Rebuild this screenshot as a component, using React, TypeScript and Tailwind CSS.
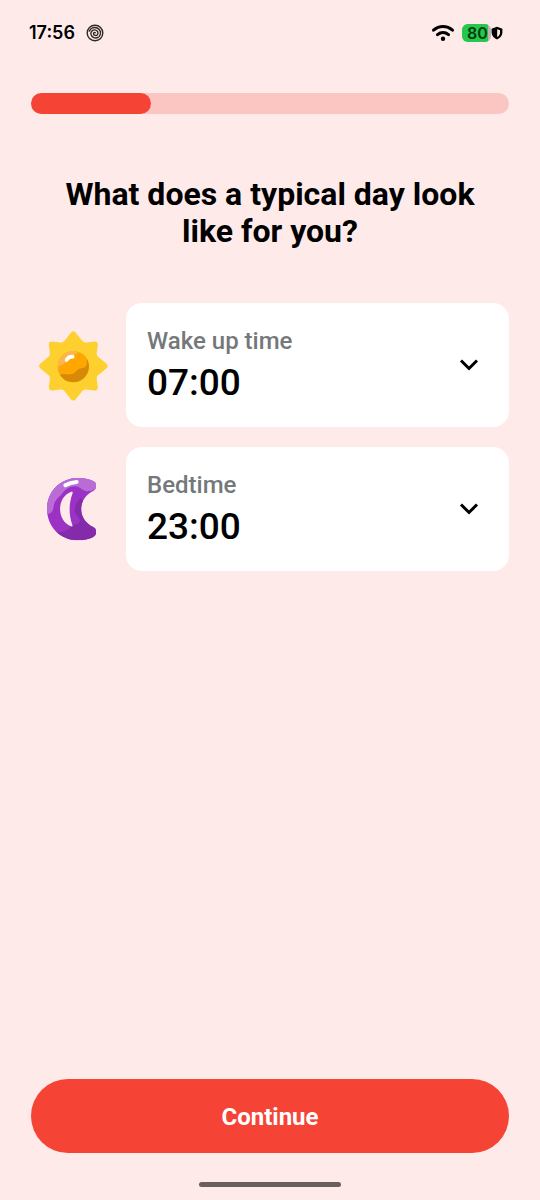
import type { ReactNode } from "react";

interface TimeFieldProps {
  id: string;
  label: string;
  value: string;
  icon: ReactNode;
}

const hours = Array.from(
  { length: 24 },
  (_, h) => `${String(h).padStart(2, "0")}:00`
);

function SunIcon() {
  return (
    <svg viewBox="22 20 216 216" className="w-[72px] h-[72px]" aria-hidden="true">
      <path
        d="M225 131 200 152Q191 160 193 170L196 196 170 193Q160 191 152 200L131 226 110 200Q102 191 92 193L66 196 69 170Q71 160 62 152L37 131 62 110Q71 102 69 92L66 66 92 69Q102 71 110 62L131 36 152 62Q160 71 170 69L196 66 193 92Q191 102 200 110Z"
        fill="#fdd02f"
        stroke="#fdd02f"
        strokeWidth="17"
        strokeLinejoin="round"
      />
      <circle cx="131" cy="133" r="47" fill="#ffa600" />
      <path
        d="M84 136A47 47 0 0 1 147 89C140 97 130 97 122 101C109 107 111 117 105 123C99 129 90 128 84 136Z"
        fill="#fdb64d"
      />
      <path
        d="M170 107A47 47 0 0 1 91 158C101 151 113 158 124 156C136 154 138 146 146 141C154 136 165 140 170 129C173 121 172 114 170 107Z"
        fill="#d68a08"
      />
      <path
        d="M111 113C114 107 122 103 129 103"
        fill="none"
        stroke="#fff"
        strokeWidth="11"
        strokeLinecap="round"
      />
    </svg>
  );
}

function MoonIcon() {
  return (
    <svg viewBox="0 0 228 264" className="w-[76px] h-[88px]" aria-hidden="true">
      <clipPath id="moon">
        <path d="M176 77C126 100 126 164 176 187Q183 190 183 198V204Q183 212 175 216C162 223 145 226 129 226C75 226 36 184 36 132C36 80 75 39 129 39C146 39 162 42 176 49Q183 52 183 60V66Q183 73 176 77Z" />
      </clipPath>
      <g clipPath="url(#moon)">
        <path d="M30 30h160v200H30z" fill="#9b31c5" />
        <path
          d="M30 148C48 149 54 139 56 125C58 105 73 96 83 84C92 71 106 65 119 64C134 63 145 81 159 79C172 78 180 72 190 68V30H30Z"
          fill="#b96cd6"
        />
        <path
          d="M60 203C79 202 96 198 106 188C119 174 129 182 134 169C138 156 119 151 119 135C120 118 130 108 137 98L190 160V235H60Z"
          fill="#842baa"
        />
      </g>
      <path
        d="M109 80C64 95 64 169 109 184Q114 185 112 180C101 148 101 116 113 84Q114 79 109 80Z"
        fill="#feebe9"
      />
      <path
        d="M91 61C101 55 112 52 125 51"
        fill="none"
        stroke="#fff"
        strokeWidth="12"
        strokeLinecap="round"
      />
    </svg>
  );
}

function ChevronIcon() {
  return (
    <svg
      viewBox="0 0 20 12"
      className="w-5 h-3"
      fill="none"
      stroke="#000"
      strokeWidth="3"
      aria-hidden="true"
    >
      <path d="M2 1.5 10 9.5 18 1.5" />
    </svg>
  );
}

function StatusBar() {
  return (
    <div className="flex items-center justify-between h-[66px] pl-[29px] pr-[37px] font-['Inter',sans-serif] text-black">
      <div className="flex items-center gap-[11px]">
        <span className="text-lg font-semibold">17:56</span>
        <svg
          viewBox="0 0 18 18"
          className="w-[18px] h-[18px]"
          fill="none"
          stroke="#302625"
          strokeWidth="1.4"
          strokeLinecap="round"
          aria-hidden="true"
        >
          <circle cx="9" cy="9" r="7.8" />
          <path d="M3.5 7C4.5 4 8 2.700 11.2 4C14.600 5.500 15.500 9.500 13.400 12.200" />
          <path d="M12.400 13.200C9.500 15 5.500 13.500 4.900 10.200C4.500 7.500 6.500 5.800 8.900 5.900C11.500 6.100 12.800 8.800 11.400 10.700C10.200 12 7.700 11.600 7.500 9.800C7.400 8.700 8.500 8.100 9.300 8.700" />
        </svg>
      </div>
      <div className="flex items-center">
        <svg
          viewBox="0 0 24 18"
          className="w-6 h-[18px] mr-[7px]"
          fill="none"
          stroke="#000"
          strokeWidth="3"
          strokeLinecap="round"
          aria-hidden="true"
        >
          <path d="M2.5 6.2C8 1.2 16 1.2 21.5 6.2M6.5 10.7C9.8 7.9 14.2 7.9 17.5 10.7" />
          <circle cx="12" cy="14.8" r="2.2" fill="#000" stroke="none" />
        </svg>
        <div className="flex items-center w-[29px] h-[18px] rounded-[6px] bg-[#b9b6b5] overflow-hidden">
          <span className="w-[26px] h-full pl-[5px] bg-[#25c84a] text-base leading-[18px] font-semibold text-[#073d12]">
            80
          </span>
        </div>
        <svg viewBox="0 0 12 14" className="w-3 h-[14px]" aria-hidden="true">
          <path
            d="M6 0.8 11.4 2.8V6.5C11.4 9.7 9 12.2 6 13.5C3 12.2 0.6 9.7 0.6 6.5V2.8Z"
            fill="#000"
          />
          <path d="M6.2 3.2 9 4.2V6.7C9 8.6 7.9 9.9 6.2 10.9Z" fill="#feebe9" />
        </svg>
      </div>
    </div>
  );
}

function TimeField({ id, label, value, icon }: TimeFieldProps) {
  return (
    <div className="flex items-center gap-[11px]">
      <div className="flex justify-center w-[84px] shrink-0">{icon}</div>
      <div className="grid grid-cols-1 flex-1 items-center bg-white rounded-2xl">
        <label
          htmlFor={id}
          className="col-start-1 row-start-1 self-start px-[21px] pt-6 text-2xl leading-7 font-medium text-[#75787b]"
        >
          {label}
        </label>
        <select
          id={id}
          defaultValue={value}
          className="col-start-1 row-start-1 w-full appearance-none bg-transparent px-[21px] pt-[58px] pb-[22px] text-[37px] leading-[44px] font-medium text-black rounded-2xl cursor-pointer"
        >
          {hours.map((hour) => (
            <option key={hour}>{hour}</option>
          ))}
        </select>
        <div className="col-start-1 row-start-1 justify-self-end pr-[30px] pointer-events-none">
          <ChevronIcon />
        </div>
      </div>
    </div>
  );
}

export default function App() {
  return (
    <div className="flex flex-col min-h-screen bg-[#feebe9] font-['Roboto',sans-serif] text-black">
      <StatusBar />

      <main className="flex flex-col flex-1 px-[31px] pt-[27px]">
        <div
          role="progressbar"
          aria-valuenow={25}
          aria-valuemin={0}
          aria-valuemax={100}
          aria-label="Progress"
          className="h-[21px] rounded-full bg-[#fbc5c1]"
        >
          <div className="w-1/4 h-full rounded-full bg-[#f54336]" />
        </div>

        <h1 className="mt-[62px] px-8 text-center text-[32px] leading-[37px] font-bold">
          What does a typical day look like for you?
        </h1>

        <div className="flex flex-col gap-5 mt-[53px]">
          <TimeField
            id="wake-up"
            label="Wake up time"
            value="07:00"
            icon={<SunIcon />}
          />
          <TimeField
            id="bedtime"
            label="Bedtime"
            value="23:00"
            icon={<MoonIcon />}
          />
        </div>

        <button
          type="button"
          className="mt-auto h-[74px] pt-[2px] rounded-full bg-[#f54336] text-2xl font-bold text-white cursor-pointer"
        >
          Continue
        </button>
      </main>

      <div className="flex justify-center pt-[29px] pb-[13px]">
        <div className="w-[142px] h-[5px] rounded-full bg-[#6b5f5e]" />
      </div>
    </div>
  );
}
